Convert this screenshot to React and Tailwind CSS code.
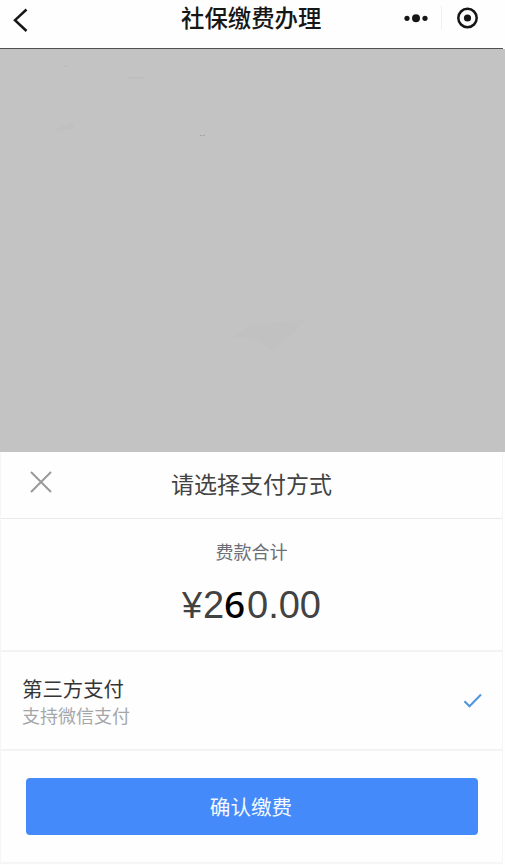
import React from 'react';

// Title bar with the mini program capsule
function TopBar() {
  return (
    <header className="mr-[2px] flex h-[49px] items-start border-b border-[#50504c] text-[#161616]">
      <div className="w-[181px]">
        <svg className="mt-[8px] ml-[12px]" width="17" height="26" viewBox="0 0 17 26" fill="none">
          <path d="M14.5 1.5L3 12.2L14.5 23" stroke="currentColor" strokeWidth="2.5" />
        </svg>
      </div>
      <h1 className="mt-[4px] w-[222px] text-[23.4px] leading-[30px] font-medium whitespace-nowrap">社保缴费办理</h1>
      <svg className="mt-[12px]" width="26" height="12" viewBox="0 0 26 12" fill="currentColor">
        <circle cx="4" cy="6.3" r="2.6" />
        <circle cx="13" cy="6.3" r="4" />
        <circle cx="22" cy="6.3" r="2.6" />
      </svg>
      <div className="mt-[6px] ml-[12px] h-[23px] w-px bg-[#efefef]" />
      <svg className="mt-[6px] ml-[14px]" width="24" height="24" viewBox="0 0 24 24" fill="none">
        <circle cx="11.5" cy="12" r="9.2" stroke="currentColor" strokeWidth="2.5" />
        <circle cx="11.5" cy="12" r="3.6" fill="currentColor" />
      </svg>
    </header>
  );
}

function App() {
  return (
    <div className="flex h-[865px] w-[505px] flex-col overflow-hidden bg-[#fefefe] font-['Liberation_Sans','Noto_Sans_CJK_SC',sans-serif]">
      <TopBar />

      {/* Dimmed page behind the sheet */}
      <div className="h-[403px] bg-[#c3c3c3]">
        <svg width="505" height="403" viewBox="0 0 505 403">
          <path d="M232 288L252 276L305 271L288 289L272 301L255 291Z" fill="#c1c1c1" />
          <path d="M54 81L74 73V79L56 83Z" fill="#c0c0c0" />
          <path d="M128 28H144V29.5H128ZM64 16H67V18H64Z" fill="#bdbdbd" />
          <path d="M200 86.5H206" stroke="#a5a5a5" strokeDasharray="2 1" />
        </svg>
      </div>

      <section className="mr-[2px] h-[412px] border-x border-b-2 border-[#f5f6f8]">
        <div className="flex h-[67px] items-start border-b border-[#e8eaec]">
          <button className="mt-[18px] ml-[28px] w-[142px]">
            <svg width="24" height="24" viewBox="0 0 24 24" fill="none">
              <path d="M2 2L22 22M22 2L2 22" stroke="#9a9a9a" strokeWidth="2" />
            </svg>
          </button>
          <h2 className="mt-[18px] text-[23px] leading-[30px] text-[#434343]">请选择支付方式</h2>
        </div>

        {/* Amount */}
        <div className="h-[133px] border-b-2 border-[#f2f3f4] pt-[21px]">
          <p className="text-center text-[18px] leading-[26px] text-[#6c6f76]">费款合计</p>
          <p className="mt-[16px] flex h-[44px] items-baseline pl-[181px] text-[38px] leading-[44px] text-[#424242]">
            <span className="w-[21px] text-[36px]">¥</span>
            <span className="w-[21px]">2</span>
            <span className="w-[23px] font-['Noto_Sans'] text-[37px] font-medium text-black">6</span>
            <span>0.00</span>
          </p>
        </div>

        {/* Payment method */}
        <div className="flex h-[99px] items-start justify-between border-b-2 border-[#f2f3f4] pl-[21px]">
          <div className="pt-[24px]">
            <p className="text-[20.4px] leading-[28px] text-[#353535]">第三方支付</p>
            <p className="text-[18px] leading-[27px] text-[#a5a6aa]">支持微信支付</p>
          </div>
          <svg className="mt-[40px] mr-[19px]" width="20" height="18" viewBox="0 0 20 18" fill="none">
            <path d="M1.5 9.2L6.5 14.3L18 2.5" stroke="#4f94de" strokeWidth="2" />
          </svg>
        </div>

        <div className="pt-[27px] pr-[24px] pl-[25px]">
          <button className="h-[57px] w-full rounded-[4px] bg-[#448afb] pt-[3px] pr-[2px] text-[20.6px] text-[#f4f8ff]">确认缴费</button>
        </div>
      </section>
    </div>
  );
}

export default App;
